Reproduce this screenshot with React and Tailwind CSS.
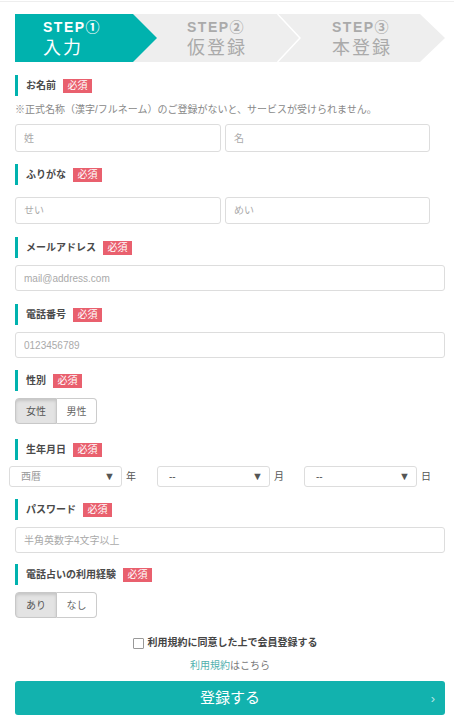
import React from "react";

function Header({ label, className }) {
  return (
    <div className={`flex items-center h-[21px] border-l-[3px] border-[#00b2ae] pl-[8px] ${className}`}>
      <span className="text-[10px] font-bold text-[#4a4a4a] leading-none">{label}</span>
      <span className="ml-[7px] w-[29px] h-[14px] bg-[#e9606e] text-white text-[10px] leading-[14px] text-center">必須</span>
    </div>
  );
}

function Field({ placeholder, className }) {
  return (
    <input
      readOnly
      placeholder={placeholder}
      className={`block border border-[#dddddd] rounded-[3px] px-[8px] text-[10px] text-[#444] placeholder:text-[#aaaaaa] outline-none bg-white ${className}`}
    />
  );
}

function Toggle({ a, b }) {
  return (
    <div className="flex h-[26px] text-[10px]">
      <div className="w-[42px] flex items-center justify-center rounded-l-[4px] border border-[#c8c8c8] bg-[#e3e3e3] text-[#555] shadow-[inset_0_2px_3px_rgba(0,0,0,0.13)]">{a}</div>
      <div className="w-[40px] flex items-center justify-center rounded-r-[4px] border border-l-0 border-[#cccccc] bg-white text-[#666]">{b}</div>
    </div>
  );
}

function Select({ value, unit, muted, className }) {
  return (
    <div className={`flex items-center ${className}`}>
      <div className="w-[113px] h-[21px] border border-[#dddddd] rounded-[3px] flex items-center justify-between pl-[11px] pr-[6px] bg-white">
        <span className={`text-[10px] ${muted ? "text-[#999]" : "text-[#555]"}`}>{value}</span>
        <span className="text-[11px] text-[#555] leading-none">▼</span>
      </div>
      <span className="ml-[4px] text-[10px] text-[#555]">{unit}</span>
    </div>
  );
}

export default function App() {
  return (
    <div className="w-[454px] min-h-[724px] bg-white font-['Liberation_Sans','Noto_Sans_CJK_JP',sans-serif] text-[#444]">
      <div className="h-px mt-px bg-[#eeeeee]" />
      <div className="pl-[15px] pr-[9px] pt-[12px]">
        {/* Steps */}
        <div className="flex h-[48px] bg-[#eeeeee] [clip-path:polygon(0_0,calc(100%_-_25px)_0,100%_50%,calc(100%_-_25px)_100%,0_100%)]">
          <div className="w-[142px] shrink-0 bg-[#00b2ae] text-white pl-[28px] pt-[6px] [clip-path:polygon(0_0,calc(100%_-_24px)_0,100%_50%,calc(100%_-_24px)_100%,0_100%)]">
            <div className="text-[14px] font-bold tracking-[1.5px] leading-[14px]">STEP①</div>
            <div className="text-[18px] tracking-[2px] leading-[18px] mt-[5px]">入力</div>
          </div>
          <div className="relative w-[144px] shrink-0 text-[#aaaaaa] pl-[30px] pt-[6px]">
            <div className="text-[14px] font-bold tracking-[1.5px] leading-[14px]">STEP②</div>
            <div className="text-[18px] tracking-[2px] leading-[18px] mt-[5px]">仮登録</div>
            <svg className="absolute right-0 top-0" width="24" height="48" viewBox="0 0 24 48">
              <polyline points="0.5,0 23,24 0.5,48" fill="none" stroke="#ffffff" strokeWidth="1.5" />
            </svg>
          </div>
          <div className="flex-1 text-[#aaaaaa] pl-[31px] pt-[6px]">
            <div className="text-[14px] font-bold tracking-[1.5px] leading-[14px]">STEP③</div>
            <div className="text-[18px] tracking-[2px] leading-[18px] mt-[5px]">本登録</div>
          </div>
        </div>

        {/* お名前 */}
        <Header label="お名前" className="mt-[13px]" />
        <p className="mt-[7px] text-[10px] leading-[14px] text-[#888]">※正式名称（漢字/フルネーム）のご登録がないと、サービスが受けられません。</p>
        <div className="mt-[7px] flex gap-[4px]">
          <Field placeholder="姓" className="w-[206px] h-[28px]" />
          <Field placeholder="名" className="w-[205px] h-[28px]" />
        </div>

        {/* ふりがな */}
        <Header label="ふりがな" className="mt-[12px]" />
        <div className="mt-[12px] flex gap-[4px]">
          <Field placeholder="せい" className="w-[206px] h-[27px]" />
          <Field placeholder="めい" className="w-[205px] h-[27px]" />
        </div>

        {/* メール */}
        <Header label="メールアドレス" className="mt-[13px]" />
        <Field placeholder="mail@address.com" className="mt-[7px] w-full h-[26px]" />

        {/* 電話番号 */}
        <Header label="電話番号" className="mt-[13px]" />
        <Field placeholder="0123456789" className="mt-[7px] w-full h-[26px]" />

        {/* 性別 */}
        <Header label="性別" className="mt-[12px]" />
        <div className="mt-[7px]">
          <Toggle a="女性" b="男性" />
        </div>

        {/* 生年月日 */}
        <Header label="生年月日" className="mt-[15px]" />
        <div className="mt-[6px] -ml-[6px] flex">
          <Select value="西暦" unit="年" muted className="w-[148px]" />
          <Select value="--" unit="月" className="w-[147px]" />
          <Select value="--" unit="日" />
        </div>

        {/* パスワード */}
        <Header label="パスワード" className="mt-[12px]" />
        <Field placeholder="半角英数字4文字以上" className="mt-[7px] w-full h-[26px]" />

        {/* 電話占いの利用経験 */}
        <Header label="電話占いの利用経験" className="mt-[11px]" />
        <div className="mt-[7px]">
          <Toggle a="あり" b="なし" />
        </div>

        {/* 同意 */}
        <div className="mt-[17px] h-[16px] flex items-center justify-center pr-[10px]">
          <span className="w-[11px] h-[11px] border border-[#999] rounded-[1px] bg-white" />
          <span className="ml-[4px] text-[10px] font-bold text-[#444] leading-none">利用規約に同意した上で会員登録する</span>
        </div>
        <div className="mt-[8px] h-[14px] flex items-center justify-center text-[10px] leading-none">
          <span className="text-[#4fb0ad]">利用規約</span>
          <span className="text-[#777]">はこちら</span>
        </div>

        <div className="relative mt-[8px] h-[34px] rounded-[3px] bg-[#12b2ae] flex items-center justify-center text-white text-[15px]">
          登録する
          <span className="absolute right-[10px] text-[13px] text-white/70 leading-none">›</span>
        </div>
      </div>
    </div>
  );
}
